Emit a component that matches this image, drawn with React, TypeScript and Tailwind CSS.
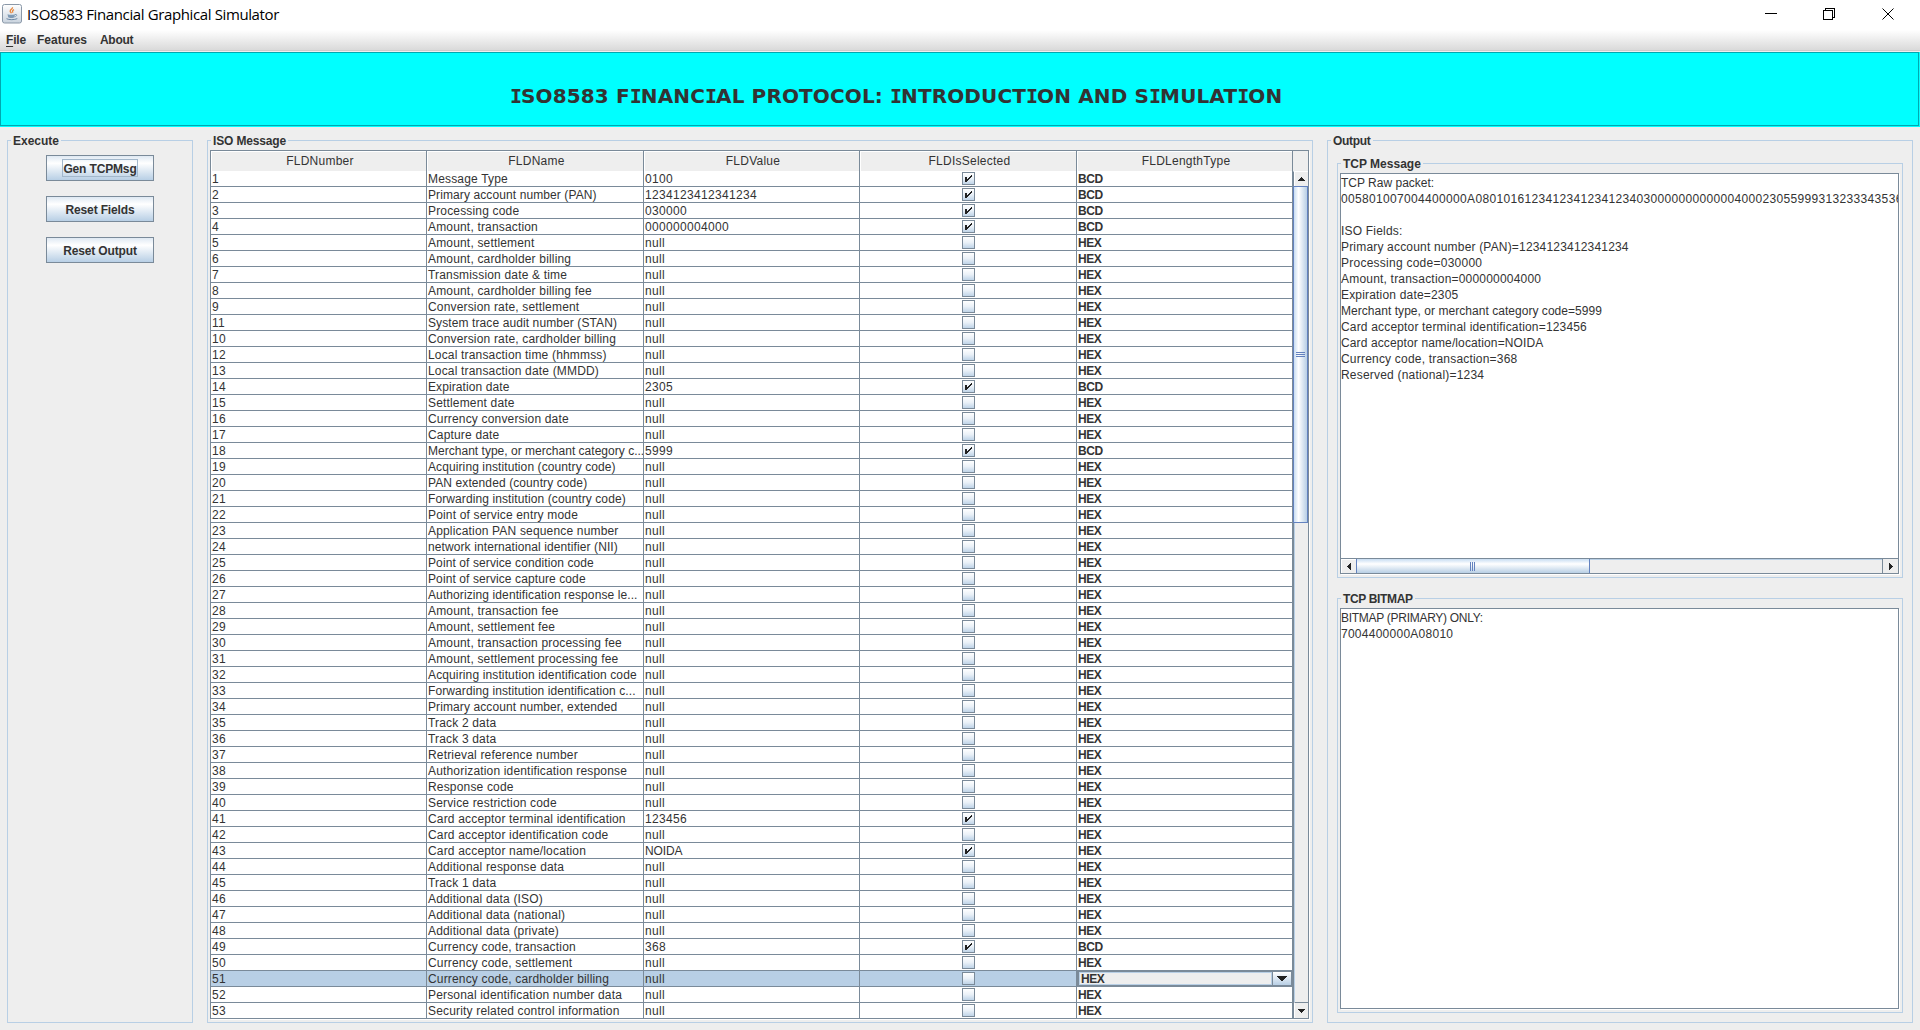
import React from "react";

type Row = { n: number; name: string; value?: string; on?: boolean; type?: string; spacing?: string };

const TIGHT = "tracking-[0.1px]";

const ROWS: Row[] = [
  { n: 1, name: "Message Type", value: "0100", on: true, type: "BCD" },
  { n: 2, name: "Primary account number (PAN)", value: "1234123412341234", on: true, type: "BCD", spacing: TIGHT },
  { n: 3, name: "Processing code", value: "030000", on: true, type: "BCD" },
  { n: 4, name: "Amount, transaction", value: "000000004000", on: true, type: "BCD" },
  { n: 5, name: "Amount, settlement" },
  { n: 6, name: "Amount, cardholder billing" },
  { n: 7, name: "Transmission date & time" },
  { n: 8, name: "Amount, cardholder billing fee" },
  { n: 9, name: "Conversion rate, settlement" },
  { n: 11, name: "System trace audit number (STAN)", spacing: TIGHT },
  { n: 10, name: "Conversion rate, cardholder billing" },
  { n: 12, name: "Local transaction time (hhmmss)" },
  { n: 13, name: "Local transaction date (MMDD)" },
  { n: 14, name: "Expiration date", value: "2305", on: true, type: "BCD", spacing: TIGHT },
  { n: 15, name: "Settlement date" },
  { n: 16, name: "Currency conversion date" },
  { n: 17, name: "Capture date" },
  { n: 18, name: "Merchant type, or merchant category c...", value: "5999", on: true, type: "BCD", spacing: "tracking-[0.02px]" },
  { n: 19, name: "Acquiring institution (country code)", spacing: TIGHT },
  { n: 20, name: "PAN extended (country code)", spacing: TIGHT },
  { n: 21, name: "Forwarding institution (country code)", spacing: TIGHT },
  { n: 22, name: "Point of service entry mode" },
  { n: 23, name: "Application PAN sequence number" },
  { n: 24, name: "network international identifier (NII)", spacing: TIGHT },
  { n: 25, name: "Point of service condition code", spacing: TIGHT },
  { n: 26, name: "Point of service capture code", spacing: TIGHT },
  { n: 27, name: "Authorizing identification response le...", spacing: TIGHT },
  { n: 28, name: "Amount, transaction fee" },
  { n: 29, name: "Amount, settlement fee" },
  { n: 30, name: "Amount, transaction processing fee" },
  { n: 31, name: "Amount, settlement processing fee" },
  { n: 32, name: "Acquiring institution identification code", spacing: "tracking-[0.13px]" },
  { n: 33, name: "Forwarding institution identification c...", spacing: TIGHT },
  { n: 34, name: "Primary account number, extended", spacing: TIGHT },
  { n: 35, name: "Track 2 data" },
  { n: 36, name: "Track 3 data" },
  { n: 37, name: "Retrieval reference number" },
  { n: 38, name: "Authorization identification response" },
  { n: 39, name: "Response code" },
  { n: 40, name: "Service restriction code" },
  { n: 41, name: "Card acceptor terminal identification", value: "123456", on: true },
  { n: 42, name: "Card acceptor identification code" },
  { n: 43, name: "Card acceptor name/location", value: "NOIDA", on: true },
  { n: 44, name: "Additional response data" },
  { n: 45, name: "Track 1 data" },
  { n: 46, name: "Additional data (ISO)" },
  { n: 47, name: "Additional data (national)" },
  { n: 48, name: "Additional data (private)" },
  { n: 49, name: "Currency code, transaction", value: "368", on: true, type: "BCD" },
  { n: 50, name: "Currency code, settlement" },
  { n: 51, name: "Currency code, cardholder billing" },
  { n: 52, name: "Personal identification number data" },
  { n: 53, name: "Security related control information" },
];

const SELECTED = 51;
const COLS = "grid grid-cols-[216px_217px_216px_217px_216px]";
const HEADERS = ["FLDNumber", "FLDName", "FLDValue", "FLDIsSelected", "FLDLengthType"];

const MESSAGE: [string, string][] = [
  ["TCP Raw packet:", "tracking-[0px]"],
  ["005801007004400000A08010161234123412341234030000000000004000230559993132333435363", "tracking-[0.33px]"],
  ["", ""],
  ["ISO Fields:", "tracking-[0.2px]"],
  ["Primary account number (PAN)=1234123412341234", "tracking-[0.18px]"],
  ["Processing code=030000", "tracking-[0.25px]"],
  ["Amount, transaction=000000004000", "tracking-[0.2px]"],
  ["Expiration date=2305", "tracking-[0.18px]"],
  ["Merchant type, or merchant category code=5999", "tracking-[0.04px]"],
  ["Card acceptor terminal identification=123456", "tracking-[0.17px]"],
  ["Card acceptor name/location=NOIDA", "tracking-[0.12px]"],
  ["Currency code, transaction=368", "tracking-[0.2px]"],
  ["Reserved (national)=1234", "tracking-[0.2px]"],
];

function Panel({ title, className, titleClass = "", children }: { title: string; className: string; titleClass?: string; children?: React.ReactNode }) {
  return (
    <section className={`relative border border-[#b8cfe5] ${className}`}>
      <h2 className={`absolute -top-[7px] left-[3px] bg-[#eeeeee] px-0.5 text-[12px] leading-[15px] font-bold whitespace-nowrap ${titleClass}`}>{title}</h2>
      {children}
    </section>
  );
}

function Check({ on }: { on?: boolean }) {
  return (
    <span className="block size-[13px] border border-[#7a8a99] bg-linear-to-b from-white via-[#eaf1f8] to-[#bfd4e8]">
      {on && (
        <svg className="block" width="11" height="11" viewBox="0 0 11 11" shapeRendering="crispEdges">
          <path d="M2 4h2v5H2zM4 6h1v2H4zM5 5h1v2H5zM6 4h1v2H6zM7 3h1v2H7zM8 2h1v2H8z" fill="#222" />
        </svg>
      )}
    </span>
  );
}

function Tri({ dir }: { dir: "up" | "down" | "left" | "right" }) {
  const d = {
    up: "M4 2h1v1H4zM3 3h3v1H3zM2 4h5v1H2zM1 5h7v1H1z",
    down: "M1 3h7v1H1zM2 4h5v1H2zM3 5h3v1H3zM4 6h1v1H4z",
    left: "M2 4h1v1H2zM3 3h1v3H3zM4 2h1v5H4zM5 1h1v7H5z",
    right: "M3 1h1v7H3zM4 2h1v5H4zM5 3h1v3H5zM6 4h1v1H6z",
  }[dir];
  return (
    <svg className="block" width="9" height="9" viewBox="0 0 9 9" shapeRendering="crispEdges">
      <path d={d} fill="#222" />
    </svg>
  );
}

function ComboCell() {
  return (
    <div className="-mt-px flex h-[17px] border-2 border-[#7a8a99] bg-[#eeeeee]">
      <div className="h-[13px] flex-1 border border-[#b8cfe5] pl-px text-[12px] leading-[12px] font-bold tracking-[-0.4px]">HEX</div>
      <div className="flex w-[19px] items-center justify-center border-l border-[#7a8a99] bg-linear-to-b from-white to-[#b8cfe5]">
        <svg width="10" height="5" viewBox="0 0 10 5" shapeRendering="crispEdges">
          <path d="M0 0h10v1H0zM1 1h8v1H1zM2 2h6v1H2zM3 3h4v1H3zM4 4h2v1H4z" fill="#222" />
        </svg>
      </div>
    </div>
  );
}

function TableRow({ row }: { row: Row }) {
  const sel = row.n === SELECTED;
  const box = "h-4 border-r border-b border-[#7a8a99]";
  const cell = `${box} overflow-hidden pl-px text-[12px] leading-[17px] whitespace-nowrap`;
  return (
    <div className={`${COLS} ${sel ? "bg-[#b8cfe5]" : "bg-white"}`}>
      <div className={`${cell} tracking-[0.33px]`}>{row.n}</div>
      <div className={`${cell} ${row.spacing ?? "tracking-[0.17px]"}`}>{row.name}</div>
      <div className={`${cell} ${row.value === "NOIDA" ? "tracking-[-0.1px]" : "tracking-[0.33px]"}`}>{row.value ?? "null"}</div>
      <div className={`${box} pt-px pl-[102px]`}>
        <Check on={row.on} />
      </div>
      {sel ? <ComboCell /> : <div className={`${cell} font-bold tracking-[-0.4px]`}>{row.type ?? "HEX"}</div>}
    </div>
  );
}

function JavaIcon() {
  return (
    <svg width="20" height="20" viewBox="0 0 20 20" fill="none">
      <defs>
        <linearGradient id="tile" x1="0" y1="0" x2="0" y2="1">
          <stop offset="0" stopColor="#fff" />
          <stop offset="1" stopColor="#c9d3de" />
        </linearGradient>
      </defs>
      <rect x="0.5" y="0.5" width="19" height="18.5" rx="2" fill="url(#tile)" stroke="#8a98a8" />
      <path d="M10.500 3.200c.6 1.700-2.700 2.500-2.300 4.100.1.700.9 1.200 1.300 2M12 5.600c-1.500.8-2 1.600-1 3" stroke="#e8873c" strokeWidth="1.300" />
      <path d="M5.500 10.300c2 .7 5.500.7 7.500 0l-.6 3c-.2.900-5.800.900-6.200 0z" fill="#7f9ab5" />
      <path d="M13 10.500c2.300-.6 2.500 1.500-.4 2.300" stroke="#7f9ab5" />
      <path d="M4.500 14.700c2.500 1.300 8 1.300 10.800-.1" stroke="#6d89a6" />
    </svg>
  );
}

function Banner() {
  const text = "ISO8583 FINANCIAL PROTOCOL: INTRODUCTION AND SIMULATION";
  return (
    <div className="mt-px h-[75px] bg-[#00ffff] pr-px pb-px">
      <div className="h-[74px] border border-[#00a8b0] pt-[31px] pl-[509px]">
        <h1 className="font-['DejaVu_Sans',sans-serif] text-[20px] leading-[24px] font-bold tracking-[0.13px] whitespace-nowrap text-[#333333]">
          {text.split(/(I)/).map((part, i) =>
            part === "I" ? (
              <span key={i} className="font-['DejaVu_Sans_Mono',monospace] tracking-[-1px]">I</span>
            ) : (
              part
            ),
          )}
        </h1>
      </div>
    </div>
  );
}

export default function App() {
  const button = "flex h-[26px] w-[108px] items-center justify-center border border-[#7a8a99] bg-linear-to-b from-[#dfe9f3] via-white via-30% to-[#b8cfe5] pt-px text-[12px] leading-[16px] font-bold tracking-[-0.15px]";
  return (
    <div className="flex h-[1030px] w-[1920px] flex-col overflow-hidden bg-[#eeeeee] font-['Liberation_Sans',Arial,sans-serif] text-[#333333]">
      <header className="flex h-[30px] items-start bg-white">
        <div className="pt-1 pl-0.5"><JavaIcon /></div>
        <div className="pt-[3px] pl-[5px] font-['Open_Sans',sans-serif] text-[15px] leading-[23px] tracking-[-0.38px] whitespace-nowrap text-black">ISO8583 Financial Graphical Simulator</div>
        <svg className="mt-[7px] mr-[25px] ml-auto" width="131" height="14" viewBox="0 0 131 14" fill="none" stroke="#000">
          <path d="M1 6.500h12M59.500 3.500h9v9h-9zM61.500 3v-1.500h9v9h-2" shapeRendering="crispEdges" />
          <path d="M118.500 1.500l11 11M129.500 1.500l-11 11" />
        </svg>
      </header>
      <nav className="flex h-[21px] gap-[12px] border-b border-[#cccccc] bg-linear-to-b from-white to-[#dadada] pl-[6px] text-[12px] leading-[20px] font-bold">
        <span className="w-[19px] tracking-[-0.2px]"><span className="underline underline-offset-2">F</span>ile</span>
        <span className="w-[51px]">Features</span>
        <span className="tracking-[-0.3px]">About</span>
      </nav>
      <Banner />
      <main className="flex gap-[14px] pt-[13px] pl-[7px]">
        <Panel title="Execute" className="h-[883px] w-[186px] shrink-0">
          <div className="flex flex-col items-center gap-[15px] pt-[14px]">
            <div className={button}><span className="-mt-px h-[18px] border border-[#a3b8cc] leading-[18px]">Gen TCPMsg</span></div>
            <div className={button}>Reset Fields</div>
            <div className={button}>Reset Output</div>
          </div>
        </Panel>

        <Panel title="ISO Message" titleClass="tracking-[-0.15px]" className="h-[883px] w-[1106px] shrink-0 pt-[9px] pl-[2px]">
          <div className="h-[869px] w-[1099px] border-x border-t border-[#7a8a99] shadow-[1px_1px_0_#ffffff]">
            <div className="flex h-[20px]">
              <div className={COLS}>
                {HEADERS.map((h) => (
                  <div key={h} className="border-r border-b border-[#7a8a99] pl-[3px] text-center text-[12px] leading-[21px] tracking-[0.25px] shadow-[inset_1px_1px_0_#ffffff]">{h}</div>
                ))}
              </div>
              <div className="w-[15px]" />
            </div>
            <div className="flex">
              <div>
                {ROWS.map((r) => <TableRow key={r.n} row={r} />)}
              </div>
              <div className="flex h-[848px] w-[15px] flex-col border-t border-b border-l border-t-white border-b-[#7a8a99] border-l-[#7a8a99]">
                <div className="flex h-[14px] items-center justify-center border-l border-white"><Tri dir="up" /></div>
                <div className="-ml-px flex h-[337px] flex-col items-center justify-center gap-px border border-[#6382bf] bg-linear-to-r from-[#c8ddf2] via-white via-35% to-[#b8cfe5]">
                  <div className="h-px w-[9px] bg-[#6382bf]" />
                  <div className="h-px w-[9px] bg-[#6382bf]" />
                  <div className="h-px w-[9px] bg-[#6382bf]" />
                </div>
                <div className="flex-1 border-l border-[#b8cfe5]" />
                <div className="flex h-4 items-center justify-center border-t border-l border-t-[#7a8a99] border-l-white"><Tri dir="down" /></div>
              </div>
            </div>
          </div>
        </Panel>

        <Panel title="Output" titleClass="tracking-[-0.3px]" className="h-[883px] w-[586px] shrink-0 pt-[22px] pl-[9px]">
          <Panel title="TCP Message" className="h-[415px] w-[566px] pt-[9px] pl-[2px]">
            <div className="h-[401px] w-[559px] border border-[#7a8a99] bg-white shadow-[1px_1px_0_#ffffff]">
              <div className="h-[384px] overflow-hidden pt-px text-[12px] leading-[16px] whitespace-pre">
                {MESSAGE.map(([line, spacing], i) => (
                  <div key={i} className={`h-4 ${spacing}`}>{line}</div>
                ))}
              </div>
              <div className="flex h-[15px] border-t border-[#7a8a99] bg-[#eeeeee]">
                <div className="flex w-[15px] items-center justify-center border-t border-l border-white"><Tri dir="left" /></div>
                <div className="flex w-[234px] items-center justify-center gap-px border-x border-[#6382bf] bg-linear-to-b from-[#c8ddf2] via-white via-35% to-[#b8cfe5] pr-px">
                  <div className="h-[9px] w-px bg-[#6382bf]" />
                  <div className="h-[9px] w-px bg-[#6382bf]" />
                  <div className="h-[9px] w-px bg-[#6382bf]" />
                </div>
                <div className="flex-1 border-t border-[#b8cfe5]" />
                <div className="flex w-4 items-center justify-center border-l border-[#7a8a99]"><Tri dir="right" /></div>
              </div>
            </div>
          </Panel>
          <Panel title="TCP BITMAP" titleClass="tracking-[-0.35px]" className="mt-[20px] h-[415px] w-[566px] pt-[9px] pl-[2px]">
            <div className="h-[401px] w-[559px] border border-[#7a8a99] bg-white pt-px text-[12px] leading-[16px] shadow-[1px_1px_0_#ffffff]">
              <div className="tracking-[-0.28px]">BITMAP (PRIMARY) ONLY:</div>
              <div className="tracking-[0.26px]">7004400000A08010</div>
            </div>
          </Panel>
        </Panel>
      </main>
    </div>
  );
}
